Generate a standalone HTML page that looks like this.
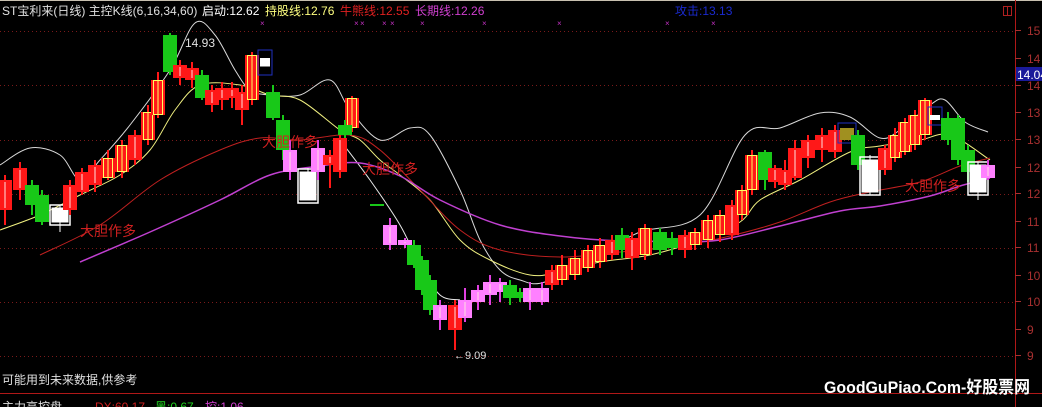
<!DOCTYPE html>
<html><head><meta charset="utf-8"><style>
body{margin:0;background:#000;width:1042px;height:407px;overflow:hidden;font-family:"Liberation Sans","Noto Sans CJK SC",sans-serif}
svg{position:absolute;left:0;top:0}
</style></head><body>
<svg id="s" width="1042" height="407" xmlns="http://www.w3.org/2000/svg" font-family="Liberation Sans, Noto Sans CJK SC, sans-serif">
<rect width="1042" height="407" fill="#000"/>
<line x1="0" y1="0.5" x2="1042" y2="0.5" stroke="#c8c0b0"/>
<g id="grid" stroke="#7a1a1a" stroke-dasharray="1,3"></g>
<line x1="1015.5" y1="0" x2="1015.5" y2="407" stroke="#b01818"/>
<line x1="0" y1="393.5" x2="1042" y2="393.5" stroke="#b01818"/>
<g id="axis" fill="#a83030" font-size="12"></g>
<g id="lines" fill="none"></g>
<g id="candles"></g>
<g font-size="12">
<text x="2" y="15" fill="#e0e0e0">ST宝利来(日线) 主控K线(6,16,34,60)</text>
<text x="202" y="15" fill="#fff">启动:12.62</text>
<text x="265" y="15" fill="#ffff80">持股线:12.76</text>
<text x="340" y="15" fill="#e02020">牛熊线:12.55</text>
<text x="415" y="15" fill="#d040d0">长期线:12.26</text>
<text x="675" y="15" fill="#1a2ad0">攻击:13.13</text>
</g>
<rect x="1003.5" y="6.5" width="8" height="9" fill="none" stroke="#b02020"/>
<line x1="1007.5" y1="6" x2="1007.5" y2="16" stroke="#b02020"/>
<g id="marks" fill="#c030c0" font-size="8"></g>
<rect x="1016" y="67" width="26" height="14" fill="#1a1a9a"/>
<text x="1017" y="79" fill="#fff" font-size="12">14.04</text>
<g fill="#d02020" font-size="14">
<text x="80" y="236">大胆作多</text>
<text x="262" y="147">大胆作多</text>
<text x="362" y="174">大胆作多</text>
<text x="905" y="191">大胆作多</text>
</g>
<text x="185" y="47" fill="#e0e0e0" font-size="12">14.93</text>
<text x="454" y="359" fill="#e0e0e0" font-size="11">←9.09</text>
<text x="2" y="384" fill="#e0e0e0" font-size="12">可能用到未来数据,供参考</text>
<text x="824" y="393" fill="#fff" font-size="17" font-weight="bold" textLength="206" lengthAdjust="spacingAndGlyphs">GoodGuPiao.Com-好股票网</text>
<text x="2" y="411" fill="#e0e0e0" font-size="12">主力高控盘</text>
<text x="95" y="411" fill="#d02020" font-size="12">DX:60.17</text>
<text x="155" y="411" fill="#20d020" font-size="12">黑:0.67</text>
<text x="205" y="411" fill="#d040d0" font-size="12">控:1.06</text>
</svg>
<script>
var NS="http://www.w3.org/2000/svg";
function el(p,t,a){var e=document.createElementNS(NS,t);for(var k in a)e.setAttribute(k,a[k]);document.getElementById(p).appendChild(e);return e;}
[31,85,140,194,248,302,356].forEach(function(y){el("grid","line",{x1:0,y1:y+.5,x2:1014,y2:y+.5});});
[[15,35],[14,63],[14,90],[13,117],[13,144],[12,172],[12,198],[11,226],[11,252],[10,280],[10,306],[9,334],[9,360]].forEach(function(a){var t=el("axis","text",{x:1027,y:a[1]});t.textContent=a[0];el("axis","line",{x1:1015,y1:a[1]-4.5,x2:1021,y2:a[1]-4.5,stroke:"#a83030"});});
[263,357,363,385,393,423,485,560,668,714].forEach(function(x){var t=el("marks","text",{x:x-3,y:26});t.textContent="×";});
function pl(p,c,w){var d="M"+p[0][0]+","+p[0][1];
 for(var i=0;i<p.length-1;i++){var p0=p[Math.max(0,i-1)],p1=p[i],p2=p[i+1],p3=p[Math.min(p.length-1,i+2)];
 d+=" C"+(p1[0]+(p2[0]-p0[0])/6)+","+(p1[1]+(p2[1]-p0[1])/6)+" "+(p2[0]-(p3[0]-p1[0])/6)+","+(p2[1]-(p3[1]-p1[1])/6)+" "+p2[0]+","+p2[1];}
 el("lines","path",{d:d,stroke:c,"stroke-width":w||1});}
pl([[0,165],[30,148],[60,155],[80,180],[100,160],[130,125],[170,70],[195,23],[215,35],[235,70],[250,90],[270,95],[300,95],[330,80],[350,110],[380,140],[410,128],[430,135],[460,190],[480,240],[500,270],[520,280],[545,282],[600,255],[640,232],[700,215],[745,135],[780,128],[820,113],[850,117],[880,138],[900,130],[930,105],[945,100],[965,122],[988,132]],"#d8d8d8");
pl([[0,230],[40,215],[80,195],[120,175],[150,150],[175,110],[200,85],[240,85],[270,95],[300,100],[340,130],[360,140],[380,160],[400,175],[430,200],[460,240],[490,260],[530,275],[560,272],[600,262],[650,255],[700,240],[740,222],[760,200],[800,180],[850,152],[880,146],[920,140],[950,135],[990,160]],"#f0f080");
pl([[340,140],[370,180],[400,225],[420,265],[440,295],[460,300]],"#e8e8e8");
pl([[40,255],[100,225],[160,180],[220,150],[260,138],[300,140],[350,135],[380,150],[420,190],[460,230],[500,250],[560,257],[620,252],[680,246],[730,236],[780,222],[830,202],[870,192],[920,182],[960,166],[990,158]],"#c02020");
pl([[80,262],[150,232],[220,200],[270,175],[320,166],[360,163],[400,176],[440,200],[500,225],[560,236],[620,241],[680,241],[720,240],[780,226],[840,211],[880,206],[930,196],[960,186],[990,178]],"#c040d0",1.5);
var C={R:"#ff1818",G:"#18c818",P:"#ff80ff",Y:"#ff1818"};
var d=[[5,180,210,175,225,"R"],[20,168,190,162,200,"R"],[32,185,205,180,215,"G"],[42,195,222,190,225,"G"],[60,208,222,205,232,"W"],[70,185,210,180,215,"R"],[82,172,192,168,195,"R"],[95,165,185,160,192,"R"],[108,158,178,150,180,"Y"],[122,145,172,140,178,"Y"],[135,135,160,130,165,"R"],[148,112,140,105,145,"Y"],[158,80,115,72,118,"Y"],[170,35,72,33,75,"G"],[180,65,78,60,85,"R"],[192,68,80,62,88,"R"],[202,75,98,70,100,"G"],[212,90,105,85,112,"R"],[222,88,100,82,110,"R"],[232,88,98,82,108,"R"],[242,92,110,85,125,"R"],[252,55,100,52,105,"Y"],[265,58,75,40,90,"W2"],[273,92,118,85,120,"G"],[283,120,150,115,160,"G"],[290,150,172,140,180,"P"],[308,172,200,168,200,"W"],[318,148,172,140,180,"P"],[330,155,165,150,188,"R"],[340,138,172,130,178,"R"],[352,98,128,96,132,"Y"],[345,125,135,120,138,"G"],[377,204,206,204,206,"G"],[390,225,245,218,250,"P"],[405,240,245,238,248,"P"],[414,245,265,240,268,"G"],[422,260,290,256,295,"G"],[430,280,310,275,315,"G"],[440,305,320,300,330,"P"],[455,305,330,300,350,"R"],[465,300,318,288,322,"P"],[478,290,302,285,310,"P"],[490,282,295,275,305,"P"],[500,282,292,278,302,"P"],[510,285,298,280,305,"G"],[520,292,298,288,302,"G"],[530,288,302,282,310,"P"],[542,288,302,282,305,"P"],[552,270,285,265,290,"R"],[562,265,280,255,285,"Y"],[575,258,275,250,280,"Y"],[588,250,268,245,272,"Y"],[600,245,262,238,268,"Y"],[612,240,255,235,260,"R"],[622,235,250,228,258,"G"],[632,238,258,232,270,"R"],[645,228,255,224,260,"Y"],[660,232,250,228,255,"G"],[672,238,248,232,255,"G"],[685,235,250,230,258,"R"],[695,232,245,228,250,"Y"],[708,220,240,215,248,"Y"],[720,215,235,210,242,"Y"],[732,205,235,200,240,"R"],[742,190,215,185,220,"Y"],[752,155,190,150,195,"Y"],[765,152,180,150,190,"G"],[775,168,182,165,188,"R"],[785,170,185,160,190,"R"],[795,148,178,140,180,"R"],[808,140,158,135,168,"R"],[822,135,150,128,162,"R"],[835,130,152,125,158,"R"],[845,128,140,125,145,"W3"],[858,135,165,130,170,"G"],[870,160,192,155,195,"W"],[885,148,170,145,175,"R"],[895,135,158,128,162,"Y"],[905,122,152,118,155,"Y"],[915,115,145,110,150,"Y"],[925,100,135,98,140,"Y"],[935,115,125,110,130,"W2"],[948,118,140,112,145,"G"],[958,118,160,115,165,"G"],[968,150,172,145,182,"G"],[978,165,192,162,200,"W"],[988,165,178,160,180,"P"]];
d.forEach(function(c){var x=c[0],o=c[1],b=c[2],h=c[3],l=c[4],t=c[5],w=14;
 var col=t=="W"||t=="W2"||t=="W3"?"#fff":C[t];
 if(t=="W"){el("candles","line",{x1:x,y1:h,x2:x,y2:l,stroke:"#fff"});el("candles","rect",{x:x-w/2-1,y:o,width:w+2,height:b-o,fill:"#fff",stroke:"#fff"});el("candles","rect",{x:x-w/2-3,y:o-3,width:w+6,height:b-o+6,fill:"none",stroke:"#fff","stroke-width":1.5});return;}
 if(t=="W2"){el("candles","rect",{x:x-w/2,y:o-8,width:w,height:b-o+8,fill:"none",stroke:"#2030c0"});el("candles","rect",{x:x-5,y:o,width:10,height:(b-o)/2,fill:"#fff"});return;}
 if(t=="W3"){el("candles","rect",{x:x-w/2,y:o-5,width:w+4,height:b-o+8,fill:"none",stroke:"#2030c0"});el("candles","rect",{x:x-w/2+2,y:o,width:w,height:b-o,fill:"#a09020"});return;}
 el("candles","line",{x1:x,y1:h,x2:x,y2:l,stroke:t=="P"?"#e040e0":col,"stroke-width":2});
 el("candles","rect",{x:x-w/2,y:o,width:w,height:Math.max(2,b-o),fill:col});
 if(t=="Y"){el("candles","rect",{x:x-w/2+2.5,y:o+.5,width:w-5,height:b-o-1,fill:"none",stroke:"#ffff60"});el("candles","line",{x1:x,y1:o,x2:x,y2:b,stroke:"#ffff60"});}
 else if(t!="G"){el("candles","line",{x1:x,y1:o+2,x2:x,y2:b-2,stroke:"#ffe0e0"});}
});
</script>
</body></html>
